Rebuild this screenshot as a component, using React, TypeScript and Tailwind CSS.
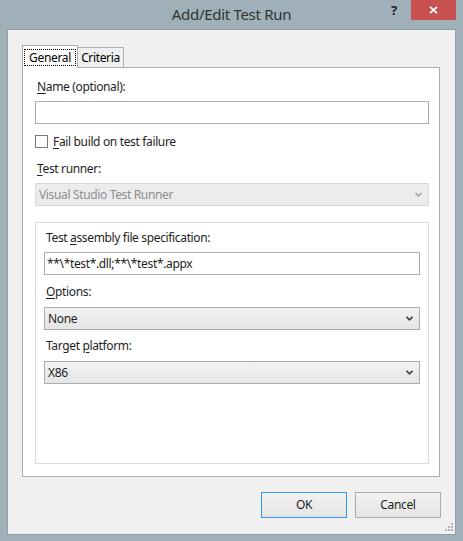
import React from "react";

const font = { fontFamily: '"Noto Sans", "Open Sans", sans-serif' };

function Chevron({ color }: { color: string }) {
  return (
    <svg width="7" height="5" viewBox="0 0 7 5" className="shrink-0">
      <path d="M0.5 0.8 L3.5 3.8 L6.5 0.8" fill="none" stroke={color} strokeWidth="1.6" />
    </svg>
  );
}

function Select({ value, disabled }: { value: string; disabled?: boolean }) {
  return (
    <div
      className={
        disabled
          ? "h-[23px] w-full flex items-center justify-between border border-[#d9d9d9] bg-[#ececec] pl-[3px] pr-[6px] text-[#8d8d8d]"
          : "h-[23px] w-full flex items-center justify-between border border-[#acacac] bg-gradient-to-b from-[#f2f2f2] to-[#e5e5e5] pl-[3px] pr-[6px] text-[#1e1e1e]"
      }
    >
      <span>{value}</span>
      <Chevron color={disabled ? "#a8a8a8" : "#404040"} />
    </div>
  );
}

function Label({ pre, key1, post }: { pre?: string; key1: string; post: string }) {
  return (
    <div className="h-[16px] leading-[16px] pl-[2px] text-[#1e1e1e]">
      {pre}
      <span className="underline underline-offset-2">{key1}</span>
      {post}
    </div>
  );
}

export default function App() {
  return (
    <div
      className="w-[463px] h-[541px] bg-[#a0b0b9] flex flex-col text-[12px] tracking-[-0.35px] relative"
      style={font}
    >
      <div className="h-[29px] relative shrink-0">
        <div className="w-full text-center text-[15px] tracking-[-0.3px] leading-[29px] text-[#333333]">
          Add/Edit Test Run
        </div>
        <div className="absolute right-[7px] top-0 flex items-start">
          <div className="w-[34px] h-[20px] flex items-center justify-center text-[13px] font-bold text-[#222] leading-none">
            ?
          </div>
          <div className="w-[45px] h-[20px] bg-[#c75050] flex items-center justify-center">
            <svg width="9" height="8" viewBox="0 0 9 8">
              <path d="M1 0.8 L8 7.2 M8 0.8 L1 7.2" stroke="white" strokeWidth="1.8" />
            </svg>
          </div>
        </div>
      </div>

      <div className="mx-[7px] mb-[6px] flex-1 border border-[#8f9ea7] bg-[#f0f0f0] flex flex-col relative">
        <div className="pt-[15px] pl-[14px]">
          <div className="flex items-end h-[22px]">
            <div className="relative z-10 -mb-px h-[23px] w-[56px] border border-b-0 border-[#acacac] bg-white flex items-center justify-center">
              <div className="border border-dotted border-black px-[4px] leading-[15px] text-black">
                General
              </div>
            </div>
            <div className="h-[20px] w-[46px] border border-b-0 border-l-0 border-[#acacac] bg-[#f0f0f0] flex items-center justify-center text-black">
              Criteria
            </div>
          </div>
          <div className="w-[418px] border border-[#acacac] bg-white pl-[12px] pr-[10px] pt-[11px] pb-[12px] flex flex-col">
            <Label key1="N" post="ame (optional):" />
            <div className="mt-[6px] h-[23px] w-full border border-[#acacac] bg-white" />
            <div className="mt-[11px] flex items-center h-[13px]">
              <div className="w-[13px] h-[13px] border border-[#7a7a7a] bg-white shrink-0" />
              <div className="ml-[5px] leading-[16px] text-[#1e1e1e]">
                <span className="underline underline-offset-2">F</span>ail build on test failure
              </div>
            </div>
            <div className="mt-[13px]">
              <Label key1="T" post="est runner:" />
            </div>
            <div className="mt-[6px]">
              <Select value="Visual Studio Test Runner" disabled />
            </div>
            <div className="mt-[16px] h-[242px] border border-[#dcdcdc] px-[8px] pt-[7px] flex flex-col">
              <Label pre="Test " key1="a" post="ssembly file specification:" />
              <div className="mt-[6px] h-[23px] w-full border border-[#acacac] bg-white flex items-center pl-[2px] text-[#1e1e1e]">
                **\*test*.dll;**\*test*.appx
              </div>
              <div className="mt-[9px]">
                <Label key1="O" post="ptions:" />
              </div>
              <div className="mt-[7px]">
                <Select value="None" />
              </div>
              <div className="mt-[8px]">
                <Label pre="Target " key1="p" post="latform:" />
              </div>
              <div className="mt-[7px]">
                <Select value="X86" />
              </div>
            </div>
          </div>
        </div>
        <div className="mt-[15px] flex justify-end gap-[8px] pr-[14px]">
          <div className="w-[86px] h-[26px] border border-[#3399ff] bg-gradient-to-b from-[#f2f2f2] to-[#e5e5e5] flex items-center justify-center text-[#1e1e1e]">
            OK
          </div>
          <div className="w-[86px] h-[26px] border border-[#acacac] bg-gradient-to-b from-[#f2f2f2] to-[#e5e5e5] flex items-center justify-center text-[#1e1e1e]">
            Cancel
          </div>
        </div>
        <svg className="absolute right-[1px] bottom-[2px]" width="9" height="9" viewBox="0 0 9 9">
          <rect x="6" y="0" width="2" height="2" fill="#b4b4b4" />
          <rect x="3" y="3" width="2" height="2" fill="#b4b4b4" />
          <rect x="6" y="3" width="2" height="2" fill="#b4b4b4" />
          <rect x="0" y="6" width="2" height="2" fill="#b4b4b4" />
          <rect x="3" y="6" width="2" height="2" fill="#b4b4b4" />
          <rect x="6" y="6" width="2" height="2" fill="#b4b4b4" />
        </svg>
      </div>
    </div>
  );
}
